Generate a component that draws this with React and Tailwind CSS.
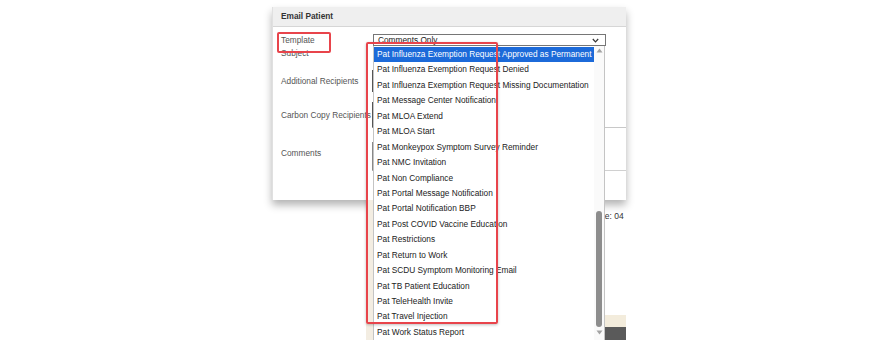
import React from 'react';

const templates = [
  'Pat Influenza Exemption Request Approved as Permanent',
  'Pat Influenza Exemption Request Denied',
  'Pat Influenza Exemption Request Missing Documentation',
  'Pat Message Center Notification',
  'Pat MLOA Extend',
  'Pat MLOA Start',
  'Pat Monkeypox Symptom Survey Reminder',
  'Pat NMC Invitation',
  'Pat Non Compliance',
  'Pat Portal Message Notification',
  'Pat Portal Notification BBP',
  'Pat Post COVID Vaccine Education',
  'Pat Restrictions',
  'Pat Return to Work',
  'Pat SCDU Symptom Monitoring Email',
  'Pat TB Patient Education',
  'Pat TeleHealth Invite',
  'Pat Travel Injection',
  'Pat Work Status Report',
];

export default function App() {
  return (
    <div className="relative w-[891px] h-[340px] overflow-hidden bg-white font-['Liberation_Sans',Arial,sans-serif] text-[8.3px]">
      {/* Email Patient modal */}
      <div className="ml-[272px] mt-[7px] w-[354px] h-[193px] overflow-hidden bg-white border-l border-[#e0e0e0] shadow-[0_5px_8px_rgba(0,0,0,0.3)]">
        <div className="h-[20px] flex items-center px-[8px] bg-[#efefef] border-b border-[#d6d6d6] font-bold text-[#333]">
          Email Patient
        </div>
        <div className="pl-[8px] pt-[7px]">
          <div className="flex h-[12px] items-center">
            <span className="w-[92px] shrink-0 text-[#555]">Template</span>
            <div className="w-[233px] shrink-0 h-[12px] flex items-center justify-between pl-[4px] pr-[6px] border border-[#767676] text-[#222]">
              <span>Comments Only</span>
              <svg width="7" height="5" viewBox="0 0 7 5"><polyline points="0.8,1 3.5,3.8 6.2,1" fill="none" stroke="#333" strokeWidth="1.2" /></svg>
            </div>
          </div>
          <div className="h-[14px] flex items-center text-[#555]">Subject</div>
          <div className="flex mt-[10px]">
            <span className="w-[91px] shrink-0 pt-[5px] text-[#555]">Additional Recipients</span>
            <div className="w-[200px] shrink-0 h-[22px] border-l border-[#555]" />
          </div>
          <div className="flex mt-[10px]">
            <span className="w-[91px] shrink-0 pt-[7px] text-[#555] whitespace-nowrap">Carbon Copy Recipients</span>
            <div className="w-[300px] shrink-0 h-[26px] border-l border-b border-l-[#555] border-b-[#c8c8c8]" />
          </div>
          <div className="flex mt-[14px]">
            <span className="w-[91px] shrink-0 pt-[5px] text-[#555]">Comments</span>
            <div className="w-[300px] shrink-0 h-[29px] border-l border-b border-l-[#888] border-b-[#d0d0d0]" />
          </div>
        </div>
      </div>

      {/* page content beneath the modal */}
      <div className="flex ml-[366px] w-[260px] h-[140px]">
        <div className="w-[7px] bg-[#f3ede2]" />
        <div className="flex-1" />
        <div className="w-[23px] flex flex-col">
          <div className="mt-[10px] whitespace-nowrap text-[#333] ml-[-9px] text-[8.5px]">Due: 04</div>
          <div className="flex-1" />
          <div className="h-[12px] bg-[#f3ecdc]" />
          <div className="h-[13px] bg-[#5a5a5a]" />
        </div>
      </div>

      {/* open dropdown list */}
      <div className="absolute left-[373px] top-[46px] w-[232px] h-[300px] flex bg-white border-x border-[#c4c4c4]">
        <div className="flex-1 pt-[0.5px]">
          {templates.map((t, i) => (
            <div
              key={t}
              className={`h-[15.45px] flex items-center pl-[3px] whitespace-nowrap ${
                i === 0 ? 'bg-[#1c6ad9] text-white' : 'text-[#222]'
              }`}
            >
              {t}
            </div>
          ))}
        </div>
        <div className="w-[10px] flex flex-col items-center bg-[#fafafa]">
          <svg width="7" height="5" viewBox="0 0 7 5" className="mt-[2px]"><polygon points="3.5,0.5 6.5,4.5 0.5,4.5" fill="#a3a3a3" /></svg>
          <div className="mt-[158px] w-[6px] h-[116px] rounded-full bg-[#8d8d8d]" />
          <svg width="7" height="5" viewBox="0 0 7 5" className="mt-[3px]"><polygon points="0.5,0.5 6.5,0.5 3.5,4.5" fill="#a3a3a3" /></svg>
        </div>
      </div>

      {/* annotation boxes */}
      <div className="absolute left-[277px] top-[32px] w-[54px] h-[21px] border-2 border-[#e8444b] rounded-[2px]" />
      <div className="absolute left-[366px] top-[42px] w-[132px] h-[282px] border-2 border-[#e8444b] rounded-[2px] shadow-[0_1px_3px_rgba(0,0,0,0.25)]" />
    </div>
  );
}
